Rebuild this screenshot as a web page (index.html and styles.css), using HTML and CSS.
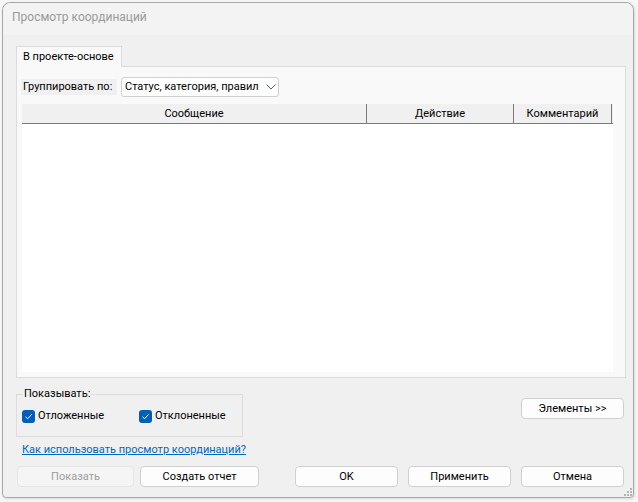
FILE: index.html
```
<!DOCTYPE html>
<html lang="ru">

<head>
    <meta charset="UTF-8" />
    <meta name="viewport" content="width=device-width, initial-scale=1.0" />
    <title>Просмотр координаций</title>
    <link rel="stylesheet" href="styles.css">
</head>

<body>
    <div class="window">
        <!-- title bar -->
        <div class="title-bar">Просмотр координаций</div>

        <div class="dialog-body">
            <!-- tabs -->
            <div class="tabs">
                <div class="tab active">В проекте-основе</div>
            </div>

            <div class="tab-panel">
                <div class="group-row">
                    <span class="group-label">Группировать по:</span>
                    <div class="combo">
                        <span class="combo-text">Статус, категория, правило</span>
                        <svg class="chevron" width="10" height="6" viewBox="0 0 10 6">
                            <path d="M0.5 0.5 L5 5 L9.5 0.5" fill="none" stroke="#5c5c5c" stroke-width="1" />
                        </svg>
                    </div>
                </div>

                <div class="grid">
                    <div class="grid-header">
                        <div class="col col-msg">Сообщение</div>
                        <div class="col col-action">Действие</div>
                        <div class="col col-comment">Комментарий</div>
                    </div>
                    <div class="grid-body"></div>
                </div>
            </div>

            <!-- show options + elements button -->
            <div class="options-row">
                <fieldset class="show-box">
                    <legend>Показывать:</legend>
                    <div class="check-row">
                        <label class="check first">
                            <span class="check-box">
                                <svg width="13" height="13" viewBox="0 0 13 13">
                                    <path d="M3.5 6.8 L5.6 8.8 L9.6 4.4" fill="none" stroke="#fff" stroke-width="1" />
                                </svg>
                            </span>
                            Отложенные
                        </label>
                        <label class="check">
                            <span class="check-box">
                                <svg width="13" height="13" viewBox="0 0 13 13">
                                    <path d="M3.5 6.8 L5.6 8.8 L9.6 4.4" fill="none" stroke="#fff" stroke-width="1" />
                                </svg>
                            </span>
                            Отклоненные
                        </label>
                    </div>
                </fieldset>
                <button class="btn btn-elements">Элементы &gt;&gt;</button>
            </div>

            <a class="help-link" href="#">Как использовать просмотр координаций?</a>

            <!-- bottom buttons -->
            <div class="button-row">
                <div class="button-group">
                    <button class="btn btn-show" disabled>Показать</button>
                    <button class="btn btn-report">Создать отчет</button>
                </div>
                <div class="button-group right">
                    <button class="btn btn-main">OK</button>
                    <button class="btn btn-main">Применить</button>
                    <button class="btn btn-main">Отмена</button>
                </div>
            </div>
        </div>

        <svg class="grip" width="8" height="8" viewBox="0 0 8 8">
            <rect x="6" y="0" width="2" height="2" fill="#b5b5b5" />
            <rect x="3" y="3" width="2" height="2" fill="#b5b5b5" />
            <rect x="6" y="3" width="2" height="2" fill="#b5b5b5" />
            <rect x="0" y="6" width="2" height="2" fill="#b5b5b5" />
            <rect x="3" y="6" width="2" height="2" fill="#b5b5b5" />
            <rect x="6" y="6" width="2" height="2" fill="#b5b5b5" />
        </svg>
    </div>
</body>

</html>
```

FILE: styles.css
```
html,
body {
    margin: 0;
    height: 100%;
    background-color: #f7f7f7;
    font-family: Roboto, "Noto Sans", sans-serif;
    font-size: 11px;
    color: #000;
    overflow: hidden;
}

.window {
    position: relative;
    box-sizing: border-box;
    width: 632px;
    height: 496px;
    margin: 2px 0 0 2px;
    background-color: #f0f0f0;
    border: 1px solid #a8a8a8;
    border-radius: 8px 8px 4px 4px;
    box-shadow: 1px 1px 3px rgba(0, 0, 0, 0.12);
}

.title-bar {
    height: 32px;
    box-sizing: border-box;
    padding: 6px 0 0 9px;
    font-size: 12px;
    line-height: 16px;
    color: #9a9a9a;
    background-color: #f3f3f3;
    border-radius: 8px 8px 0 0;
}

.dialog-body {
    padding: 11px 7px 0 13px;
}

/* tabs */
.tabs {
    display: flex;
    height: 20px;
}

.tab {
    position: relative;
    z-index: 1;
    box-sizing: border-box;
    height: 21px;
    width: 106px;
    padding: 0 0 0 6px;
    line-height: 19px;
    white-space: nowrap;
    background-color: #f9f9f9;
    border: 1px solid #dcdcdc;
    border-bottom: none;
}

.tab-panel {
    background-color: #f9f9f9;
    border: 1px solid #dcdcdc;
    padding: 10px 12px 5px 5px;
}

.group-row {
    display: flex;
    align-items: center;
    height: 20px;
    margin-bottom: 7px;
}

.group-label {
    box-sizing: border-box;
    width: 96px;
    height: 16px;
    line-height: 16px;
    padding: 0 0 0 2px;
    margin-left: -1px;
    white-space: nowrap;
    background-color: #f0f0f0;
}

.combo {
    display: flex;
    align-items: center;
    box-sizing: border-box;
    width: 158px;
    height: 20px;
    margin-left: 4px;
    padding: 0 0 0 3px;
    background-color: #fff;
    border: 1px solid #cfcfcf;
    border-radius: 3px;
}

.combo-text {
    width: 134px;
    overflow: hidden;
    white-space: nowrap;
    line-height: 18px;
}

.chevron {
    margin-left: 7px;
}

/* grid */
.grid {
    width: 591px;
}

.grid-header {
    display: flex;
    height: 19px;
    background-color: #f0f0f0;
    border-bottom: 1px solid #7a7a7a;
}

.col {
    box-sizing: border-box;
    text-align: center;
    line-height: 19px;
    border-right: 1px solid #7a7a7a;
}

.col-msg {
    width: 345px;
}

.col-action {
    width: 147px;
}

.col-comment {
    width: 98px;
}

.grid-body {
    height: 248px;
    background-color: #fff;
}

/* options */
.options-row {
    display: flex;
    justify-content: space-between;
    align-items: flex-start;
}

.show-box {
    box-sizing: border-box;
    width: 227px;
    min-width: 0;
    margin: 8px 0 0 0;
    padding: 6px 4px 12px 5px;
    border: 1px solid #dcdcdc;
}

.show-box legend {
    padding: 0 1px;
    margin-left: 1px;
    line-height: 16px;
}

.check-row {
    display: flex;
}

.check {
    display: flex;
    align-items: center;
    line-height: 16px;
    white-space: nowrap;
}

.check.first {
    width: 117px;
}

.check-box {
    display: flex;
    width: 13px;
    height: 13px;
    margin-right: 3px;
    background-color: #005fb8;
    border-radius: 3px;
}

.btn {
    box-sizing: border-box;
    height: 21px;
    padding: 0;
    font-family: inherit;
    font-size: 11px;
    color: #000;
    background-color: #fdfdfd;
    border: 1px solid #d0d0d0;
    border-radius: 4px;
}

.btn:disabled {
    color: #9d9d9d;
    background-color: #f5f5f5;
    border-color: #e6e6e6;
}

.btn-elements {
    width: 103px;
    margin-top: 20px;
    margin-right: 2px;
}

.help-link {
    display: block;
    width: fit-content;
    margin: 5px 0 0 6px;
    line-height: 16px;
    color: #0067c0;
}

.button-row {
    display: flex;
    justify-content: space-between;
    margin-top: 8px;
    padding: 0 2px 0 1px;
}

.button-group {
    display: flex;
    gap: 6px;
}

.button-group.right {
    gap: 10px;
}

.btn-show {
    width: 117px;
}

.btn-report {
    width: 119px;
}

.btn-main {
    width: 103px;
}

.grip {
    position: absolute;
    right: 1px;
    bottom: 1px;
}
```
